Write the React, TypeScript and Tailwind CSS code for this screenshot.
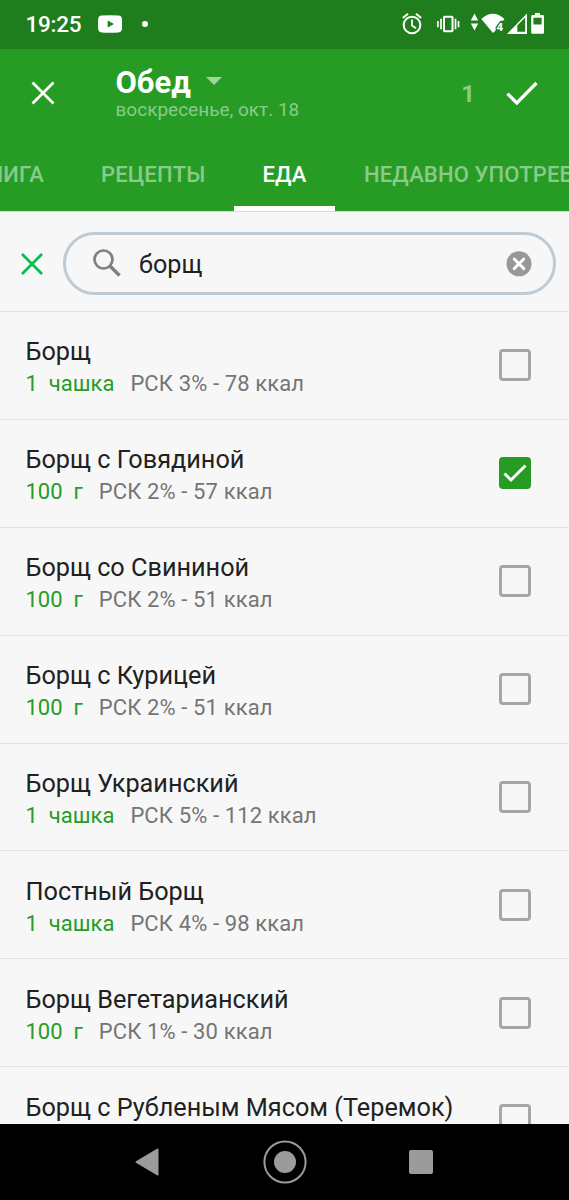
type Food = { name: string; amount: string; info: string; checked?: boolean };

const foods: Food[] = [
  { name: 'Борщ', amount: '1  чашка', info: 'РСК 3% - 78 ккал' },
  { name: 'Борщ с Говядиной', amount: '100  г', info: 'РСК 2% - 57 ккал', checked: true },
  { name: 'Борщ со Свининой', amount: '100  г', info: 'РСК 2% - 51 ккал' },
  { name: 'Борщ с Курицей', amount: '100  г', info: 'РСК 2% - 51 ккал' },
  { name: 'Борщ Украинский', amount: '1  чашка', info: 'РСК 5% - 112 ккал' },
  { name: 'Постный Борщ', amount: '1  чашка', info: 'РСК 4% - 98 ккал' },
  { name: 'Борщ Вегетарианский', amount: '100  г', info: 'РСК 1% - 30 ккал' },
  { name: 'Борщ с Рубленым Мясом (Теремок)', amount: '', info: '' },
];

function StatusBar() {
  return (
    <div className="flex h-[49px] shrink-0 items-center bg-[#207d1e] pl-[25.5px] text-white">
      <span className="w-[72px] text-[22.5px] leading-[49px] font-medium tracking-[-0.25px]">19:25</span>
      <svg width="24" height="18" viewBox="0 0 24 18" className="mt-[-1px] shrink-0">
        <path fillRule="evenodd" fill="white" d="M3.500.500Q12-.200 20.500.500 23.700.800 23.900 4 24.300 9 23.900 14 23.600 17.100 20.500 17.400 12 18 3.500 17.400.400 17.100.200 14-.200 9 .200 4 .400.800 3.500.500ZM9.700 5.500v7l6.300-3.500Z" />
      </svg>
      <span className="mt-[-2px] ml-[20px] size-[6px] rounded-full bg-white" />
      <svg width="146" height="28" viewBox="400 10 146 28" className="mt-[-1px] mr-[23px] ml-auto shrink-0" fill="none" stroke="white">
        <circle cx="412" cy="25" r="8.300" strokeWidth="2" />
        <path d="M412 19.500v6l4 2.800" strokeWidth="1.800" />
        <path d="M402.800 18l5.200-4.300M421.200 18l-5.200-4.300" strokeWidth="2.100" />
        <rect x="444" y="16.800" width="8.500" height="14.400" rx=".8" strokeWidth="2" />
        <path d="M441 18.700v10.600M437.900 21v6.200M455.500 18.700v10.600M458.500 21v6.200" strokeWidth="1.700" />
        <path d="M474.500 13.500l3.700 7h-7.400zM474.500 30.500l-3.700-7h7.400z" fill="white" stroke="none" />
        <path d="M481.300 19q11.600-10.300 23.200 0l-1.500 1.800h-2.500L495.600 27v3.500L493 33z" fill="white" stroke="none" />
        <text x="496.500" y="30.800" className="font-['Roboto'] text-[11.500px] font-bold" fill="white" stroke="none">4</text>
        <path fillRule="evenodd" d="M527 13.500V34h-20zM525.200 17.600L517.300 25.500V31.700h7.900z" fill="white" stroke="none" />
        <path fillRule="evenodd" d="M535 13h5v1.900h2.700q1.300 0 1.300 1.300v16.300q0 1.300-1.300 1.300h-10.200q-1.300 0-1.300-1.300V16.200q0-1.300 1.300-1.300H535ZM533.400 17.700v6.800h8.200v-6.800Z" fill="white" stroke="none" />
      </svg>
    </div>
  );
}

function Header() {
  return (
    <header className="flex h-[162px] shrink-0 flex-col bg-[#269c25]">
      <div className="flex h-[88px] shrink-0 items-center">
        <svg width="24" height="24" viewBox="0 0 24 24" className="mt-[-1px] ml-[30.5px] shrink-0">
          <path d="M1.500 1.500l21 21M22.500 1.500l-21 21" stroke="white" strokeWidth="2.700" />
        </svg>
        <div className="ml-[61px] flex flex-col pt-px">
          <div className="flex items-center">
            <h1 className="text-[31px] leading-[32px] font-bold text-white">Обед</h1>
            <svg width="16" height="8" viewBox="0 0 16 8" className="mt-[-4px] ml-[15px]">
              <path d="M0 0h16L8 8z" fill="#a2d49f" />
            </svg>
          </div>
          <p className="text-[19px] leading-[22px] whitespace-nowrap text-[#8acb89]">воскресенье, окт. 18</p>
        </div>
        <span className="mt-px ml-auto text-[24px] leading-[30px] font-bold text-[#8acb89]">1</span>
        <svg width="32" height="24" viewBox="0 0 32 24" className="mt-[-1px] mr-[31px] ml-[31px] shrink-0">
          <path d="M1.500 12.700l9.300 9.300L30.500 2" fill="none" stroke="white" strokeWidth="3.300" />
        </svg>
      </div>
      <nav className="flex h-[74px] overflow-hidden text-[22px] leading-[75px] font-medium tracking-[0.15px] whitespace-nowrap text-[#8acb89]">
        <span className="flex w-[68px] shrink-0 justify-end pr-[24px]">КНИГА</span>
        <span className="w-[166px] shrink-0 pl-[33px]">РЕЦЕПТЫ</span>
        <span className="w-[101px] shrink-0 border-b-[5px] border-white text-center text-white">ЕДА</span>
        <span className="shrink-0 pl-[29px]">НЕДАВНО УПОТРЕБЛЯЛИ</span>
      </nav>
    </header>
  );
}

function Search() {
  return (
    <div className="flex h-[101px] shrink-0 items-center border-t border-b border-t-[#d8d8d8] border-b-[#e2e4e4] pt-[4px]">
      <svg width="22" height="22" viewBox="0 0 22 22" className="ml-[20.5px] shrink-0">
        <path d="M1 1l20 20M21 1L1 21" stroke="#00bf4f" strokeWidth="2.700" />
      </svg>
      <div className="ml-[20.5px] flex h-[63px] w-[493px] items-center rounded-full border-[3px] border-[#c0cad2]">
        <svg width="28" height="28" viewBox="0 0 28 28" className="mt-[-1px] ml-[27px] shrink-0" fill="none" stroke="#808080">
          <circle cx="10.500" cy="10.500" r="9" strokeWidth="2.700" />
          <path d="M16.700 16.700l9.800 9.800" strokeWidth="3.500" />
        </svg>
        <span className="mt-[2px] ml-[18px] text-[25.200px] leading-[32px] text-[#212121]">борщ</span>
        <svg width="26" height="26" viewBox="0 0 26 26" className="mr-[21.5px] ml-auto shrink-0">
          <circle cx="13" cy="12.800" r="12.500" fill="#989898" />
          <path d="M8.200 8l9.600 9.600M17.800 8L8.200 17.600" stroke="white" strokeWidth="2.900" strokeLinecap="round" />
        </svg>
      </div>
    </div>
  );
}

function Row({ food }: { food: Food }) {
  return (
    <li className="flex h-[107.900px] shrink-0 items-start justify-between border-b border-[#e3e4de] pr-[38px] pl-[25.500px]">
      <div className="flex flex-col pt-[24.300px]">
        <span className="text-[25.250px] leading-[32px] whitespace-nowrap text-[#212121]">{food.name}</span>
        <span className="flex gap-[16px] text-[22px] leading-[32px] whitespace-pre">
          <span className="text-[#269c25]">{food.amount}</span>
          <span className="tracking-[0.120px] text-[#757575]">{food.info}</span>
        </span>
      </div>
      {food.checked ? (
        <span className="mt-[37.200px] flex size-[32px] items-center justify-center rounded-[4px] bg-[#269c25]">
          <svg width="24" height="20" viewBox="0 0 24 20">
            <path d="M1.500 10.500l6.500 6.500L22.500 2.500" fill="none" stroke="white" strokeWidth="3" />
          </svg>
        </span>
      ) : (
        <span className="mt-[37.200px] size-[32px] rounded-[4px] border-[3px] border-[#a6a6a6]" />
      )}
    </li>
  );
}

export default function App() {
  return (
    <div className="flex h-[1200px] w-[569px] flex-col overflow-hidden bg-[#f7f7f7] font-['Roboto',sans-serif]">
      <StatusBar />
      <Header />
      <Search />
      <ul className="flex min-h-0 flex-1 flex-col overflow-hidden">
        {foods.map((food) => (
          <Row key={food.name} food={food} />
        ))}
      </ul>
      <footer className="flex h-[76px] shrink-0 items-center bg-black pl-[135px]">
        <svg width="24" height="28" viewBox="0 0 24 28">
          <path d="M22.500 1.500v25L1.500 14z" fill="#9b9b9b" stroke="#9b9b9b" strokeWidth="2" strokeLinejoin="round" />
        </svg>
        <svg width="44" height="44" viewBox="0 0 44 44" className="ml-[103.500px]">
          <circle cx="22" cy="22" r="20.600" fill="none" stroke="#9b9b9b" strokeWidth="2" />
          <circle cx="22" cy="22" r="11" fill="#9b9b9b" />
        </svg>
        <span className="ml-[102px] size-[24px] rounded-[2px] bg-[#9b9b9b]" />
      </footer>
    </div>
  );
}
